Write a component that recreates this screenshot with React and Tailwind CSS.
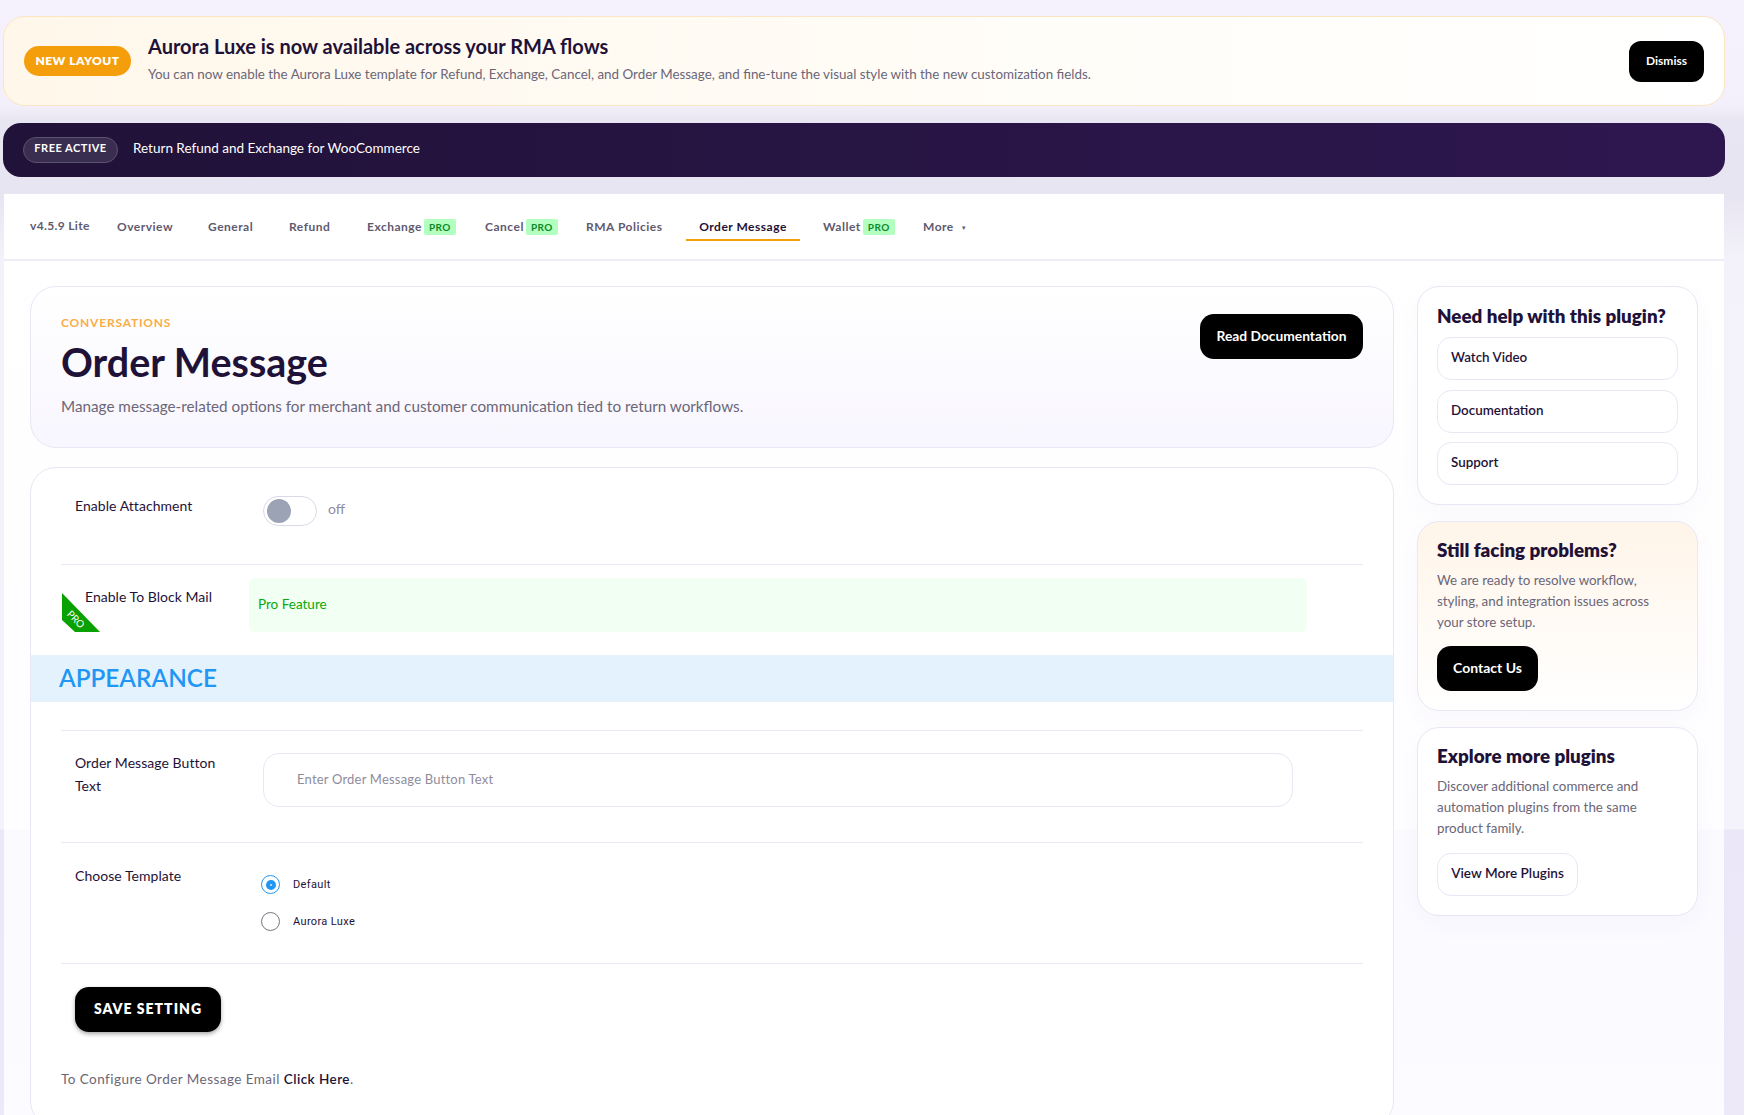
import React from "react";

const font = { fontFamily: '"Lato", "Noto Sans", sans-serif' };

const ProBadge = () => (
  <span className="ml-[2px] inline-flex h-[16px] w-[32px] items-center justify-center rounded-[2px] bg-[#b3ffc0] text-[10px] font-bold tracking-[0.4px] text-[#0a8a2a]">
    PRO
  </span>
);

const NavItem = ({ label, className = "", active, pro }) => (
  <div className={`flex h-[22px] items-center whitespace-nowrap text-[12px] font-bold tracking-[0.5px] ${active ? "text-[#1f1238]" : "text-[#5f5a70]"} ${className}`}>
    {label}
    {pro && <ProBadge />}
  </div>
);

const SideLink = ({ label }) => (
  <div className="flex h-[43px] items-center rounded-[14px] border border-[#e9e6f5] bg-white pb-[2px] pl-[13px] text-[13.4px] font-semibold text-[#1f1238]">
    {label}
  </div>
);

const SideCard = ({ title, children, className = "" }) => (
  <div className={`rounded-[22px] border border-[#e9e6f5] pl-[19px] pr-[19px] shadow-[0_8px_24px_rgba(80,60,160,0.03)] ${className}`}>
    <h3 className="text-[18.8px] font-extrabold leading-[24px] text-[#1f1238]">{title}</h3>
    {children}
  </div>
);

const Divider = () => <div className="mx-[30px] h-[1px] bg-[#ebe9f5]" />;

const Radio = ({ checked, label, className = "" }) => (
  <div className={`flex items-center ${className}`}>
    <span className={`flex h-[19px] w-[19px] items-center justify-center rounded-full border ${checked ? "border-[1.5px] border-[#2196f3]" : "border-[#77757f]"}`}>
      {checked && (
        <span className="flex h-[10px] w-[10px] items-center justify-center rounded-full bg-[#2196f3]">
          <span className="h-[2px] w-[2px] rounded-full bg-[#cfe8fc]" />
        </span>
      )}
    </span>
    <span className="ml-[13px] pt-[2px] text-[11px] tracking-[0.35px] text-[#1f1238]" style={{ fontFamily: "Roboto, sans-serif" }}>{label}</span>
  </div>
);

export default function App() {
  return (
    <div className="h-[1115px] w-full overflow-hidden bg-white" style={font}>
      <div className="h-[1115px] w-[1744px] bg-[linear-gradient(180deg,#f5f2fe_0px,#f3f0fb_106px,#e9e6f3_120px,#e8e5f2_194px,#f3f1f9_260px,#f4f2fa_829px,#ebe7f8_830px,#eee9f8_1115px)] pl-[3px] pt-[16px]">
        {/* notice */}
        <div className="flex h-[90px] w-[1722px] items-center rounded-[22px] border border-[#fde6bf] bg-[linear-gradient(90deg,#fff7ea,#fffdf8_60%,#ffffff)] pl-[20px] pr-[20px]">
          <span className="flex h-[30px] w-[107px] items-center justify-center rounded-full bg-[#f59e0b] text-[12px] font-extrabold tracking-[0.5px] text-white">
            NEW LAYOUT
          </span>
          <div className="ml-[17px] pb-[6px]">
            <div className="text-[20px] font-bold leading-[26px] text-[#1f1238]">Aurora Luxe is now available across your RMA flows</div>
            <div className="mt-[6px] text-[13.4px] leading-[18px] text-[#6b6678]">
              You can now enable the Aurora Luxe template for Refund, Exchange, Cancel, and Order Message, and fine-tune the visual style with the new customization fields.
            </div>
          </div>
          <button className="ml-auto h-[41px] w-[75px] rounded-[12px] bg-black text-[12px] font-bold text-white">Dismiss</button>
        </div>

        {/* plugin bar */}
        <div className="mt-[17px] flex h-[54px] w-[1722px] items-center rounded-[18px] bg-[linear-gradient(90deg,#201238,#2e174f)] pl-[20px]">
          <span className="flex h-[26px] w-[95px] items-center justify-center rounded-full border border-[#5b5170] bg-[#3a2e50] pb-[3px] text-[11px] font-bold tracking-[0.5px] text-white">
            FREE ACTIVE
          </span>
          <span className="ml-[15px] pb-[4px] text-[13.5px] text-white">Return Refund and Exchange for WooCommerce</span>
        </div>

        {/* panel */}
        <div className="ml-[1px] mt-[17px] h-[921px] w-[1720px] bg-[linear-gradient(180deg,#ffffff_0px,#fefdff_635px,#fbfaff_636px,#fcfbff_921px)]">
          <div className="flex h-[67px] items-center border-b-2 border-[#eeedf3] bg-white pb-[1px] pl-[26px]">
            <NavItem label="v4.5.9 Lite" className="mb-[1px] w-[87px] text-[11px] tracking-[0.35px]" />
            <NavItem label="Overview" className="mt-[2px] w-[91px]" />
            <NavItem label="General" className="mt-[2px] w-[81px]" />
            <NavItem label="Refund" className="mt-[2px] w-[78px]" />
            <NavItem label="Exchange" pro className="mt-[2px] w-[118px]" />
            <NavItem label="Cancel" pro className="mt-[2px] w-[101px]" />
            <NavItem label="RMA Policies" className="mt-[2px] w-[100px]" />
            <div className="flex h-[30px] w-[114px] items-center justify-center border-b-2 border-[#f59e0b] pt-[3px]">
              <NavItem label="Order Message" active />
            </div>
            <NavItem label="Wallet" pro className="ml-[23px] mt-[2px] w-[100px]" />
            <NavItem label="More" className="mt-[2px]" />
            <span className="ml-[7px] mt-[2px] text-[6px] text-[#5f5a70]">▼</span>
          </div>

          <div className="flex gap-[23px] pl-[26px] pt-[25px]">
            <div className="w-[1364px]">
              {/* hero */}
              <div className="flex h-[162px] justify-between rounded-[26px] border border-[#e9e6f5] bg-[linear-gradient(180deg,#ffffff,#f8f6fe)] pl-[30px] pr-[30px]">
                <div>
                  <div className="mt-[29px] text-[12px] font-bold leading-[14px] tracking-[0.8px] text-[#f9ad46]">CONVERSATIONS</div>
                  <h1 className="mt-[7px] text-[39.5px] font-bold leading-[50px] text-[#1f1238]">Order Message</h1>
                  <p className="mt-[9px] text-[15.25px] leading-[20px] text-[#6b6678]">Manage message-related options for merchant and customer communication tied to return workflows.</p>
                </div>
                <button className="mt-[27px] h-[45px] w-[163px] rounded-[14px] bg-black text-[13.8px] font-bold text-white">Read Documentation</button>
              </div>

              {/* form */}
              <div className="mt-[19px] h-[660px] rounded-[26px] border border-[#e9e6f5] bg-white">
                <div className="flex h-[96px] pl-[44px] pt-[28px]">
                  <span className="w-[188px] text-[14px] leading-[20px] tracking-[0.05px] text-[#1f1238]">Enable Attachment</span>
                  <span className="flex h-[30px] w-[54px] items-center rounded-full border border-[#d8dbe6] pl-[3px]">
                    <span className="h-[24px] w-[24px] rounded-full bg-[#9ca3b4]" />
                  </span>
                  <span className="ml-[11px] mt-[2px] text-[14px] text-[#8f8c9c]">off</span>
                </div>
                <Divider />
                <div className="relative flex h-[90px] pl-[54px] pt-[13px]">
                  <span className="mt-[9px] w-[164px] text-[14px] leading-[20px] tracking-[0.03px] text-[#1f1238]">Enable To Block Mail</span>
                  <div className="flex h-[54px] w-[1058px] items-center rounded-[6px] bg-[#f2fff3] pb-[2px] pl-[9px] text-[13.5px] text-[#0aa80a]">Pro Feature</div>
                  {/* pro ribbon */}
                  <svg className="absolute left-[31px] top-[28px]" width="38" height="39" viewBox="0 0 38 39">
                    <polygon points="0,0 38,39 13,39 0,27" fill="#09a100" />
                  </svg>
                  <span className="absolute left-[35px] top-[48px] rotate-45 text-[10px] leading-[12px] text-white">PRO</span>
                </div>
                <div className="flex h-[47px] items-center bg-[#e3f2fd] pb-[1px] pl-[28px] text-[24.3px] font-semibold text-[#2196f3]">APPEARANCE</div>
                <div className="h-[28px]" />
                <Divider />
                <div className="flex h-[111px] pl-[44px] pt-[22px]">
                  <span className="-mt-[2px] w-[188px] text-[14px] leading-[23px] tracking-[0.05px] text-[#1f1238]">Order Message Button<br />Text</span>
                  <div className="flex h-[54px] w-[1030px] items-center rounded-[16px] border border-[#e9e6f5] pl-[33px] text-[13px] tracking-[0.2px] text-[#8f8c9c]">Enter Order Message Button Text</div>
                </div>
                <Divider />
                <div className="flex h-[120px] pl-[44px] pt-[23px]">
                  <span className="w-[186px] text-[14px] leading-[20px] tracking-[0.05px] text-[#1f1238]">Choose Template</span>
                  <div className="pt-[9px]">
                    <Radio checked label="Default" />
                    <Radio label="Aurora Luxe" className="mt-[18px]" />
                  </div>
                </div>
                <Divider />
                <button className="ml-[44px] mt-[23px] h-[45px] w-[146px] rounded-[14px] bg-black pb-[2px] text-[14px] font-extrabold tracking-[1px] text-white shadow-[0_2px_4px_rgba(0,0,0,0.35)]">SAVE SETTING</button>
                <p className="ml-[30px] mt-[37px] text-[13.5px] tracking-[0.45px] text-[#6b6678]">
                  To Configure Order Message Email <span className="font-semibold text-[#1f1238]">Click Here</span>.
                </p>
              </div>
            </div>

            {/* sidebar */}
            <div className="flex w-[281px] flex-col gap-[16px]">
              <SideCard title="Need help with this plugin?" className="h-[219px] bg-white pt-[17px]">
                <div className="mt-[9px] flex flex-col gap-[9.5px]">
                  <SideLink label="Watch Video" />
                  <SideLink label="Documentation" />
                  <SideLink label="Support" />
                </div>
              </SideCard>
              <SideCard title="Still facing problems?" className="h-[190px] bg-[linear-gradient(180deg,#fff5e9,#ffffff)] pt-[16px]">
                <p className="mt-[8px] w-[225px] text-[13.35px] leading-[21px] text-[#6b6678]">We are ready to resolve workflow, styling, and integration issues across your store setup.</p>
                <button className="mt-[13px] h-[45px] w-[101px] rounded-[14px] bg-black pb-[2px] text-[14px] font-bold text-white">Contact Us</button>
              </SideCard>
              <SideCard title="Explore more plugins" className="h-[189px] bg-white pt-[16px]">
                <p className="mt-[8px] w-[225px] text-[13.35px] leading-[21px] text-[#6b6678]">Discover additional commerce and automation plugins from the same product family.</p>
                <div className="mt-[14px] flex h-[43px] w-[141px] items-center justify-center rounded-[14px] border border-[#e9e6f5] bg-white pb-[2px] text-[13.6px] font-semibold text-[#1f1238]">View More Plugins</div>
              </SideCard>
            </div>
          </div>
        </div>
      </div>
    </div>
  );
}
